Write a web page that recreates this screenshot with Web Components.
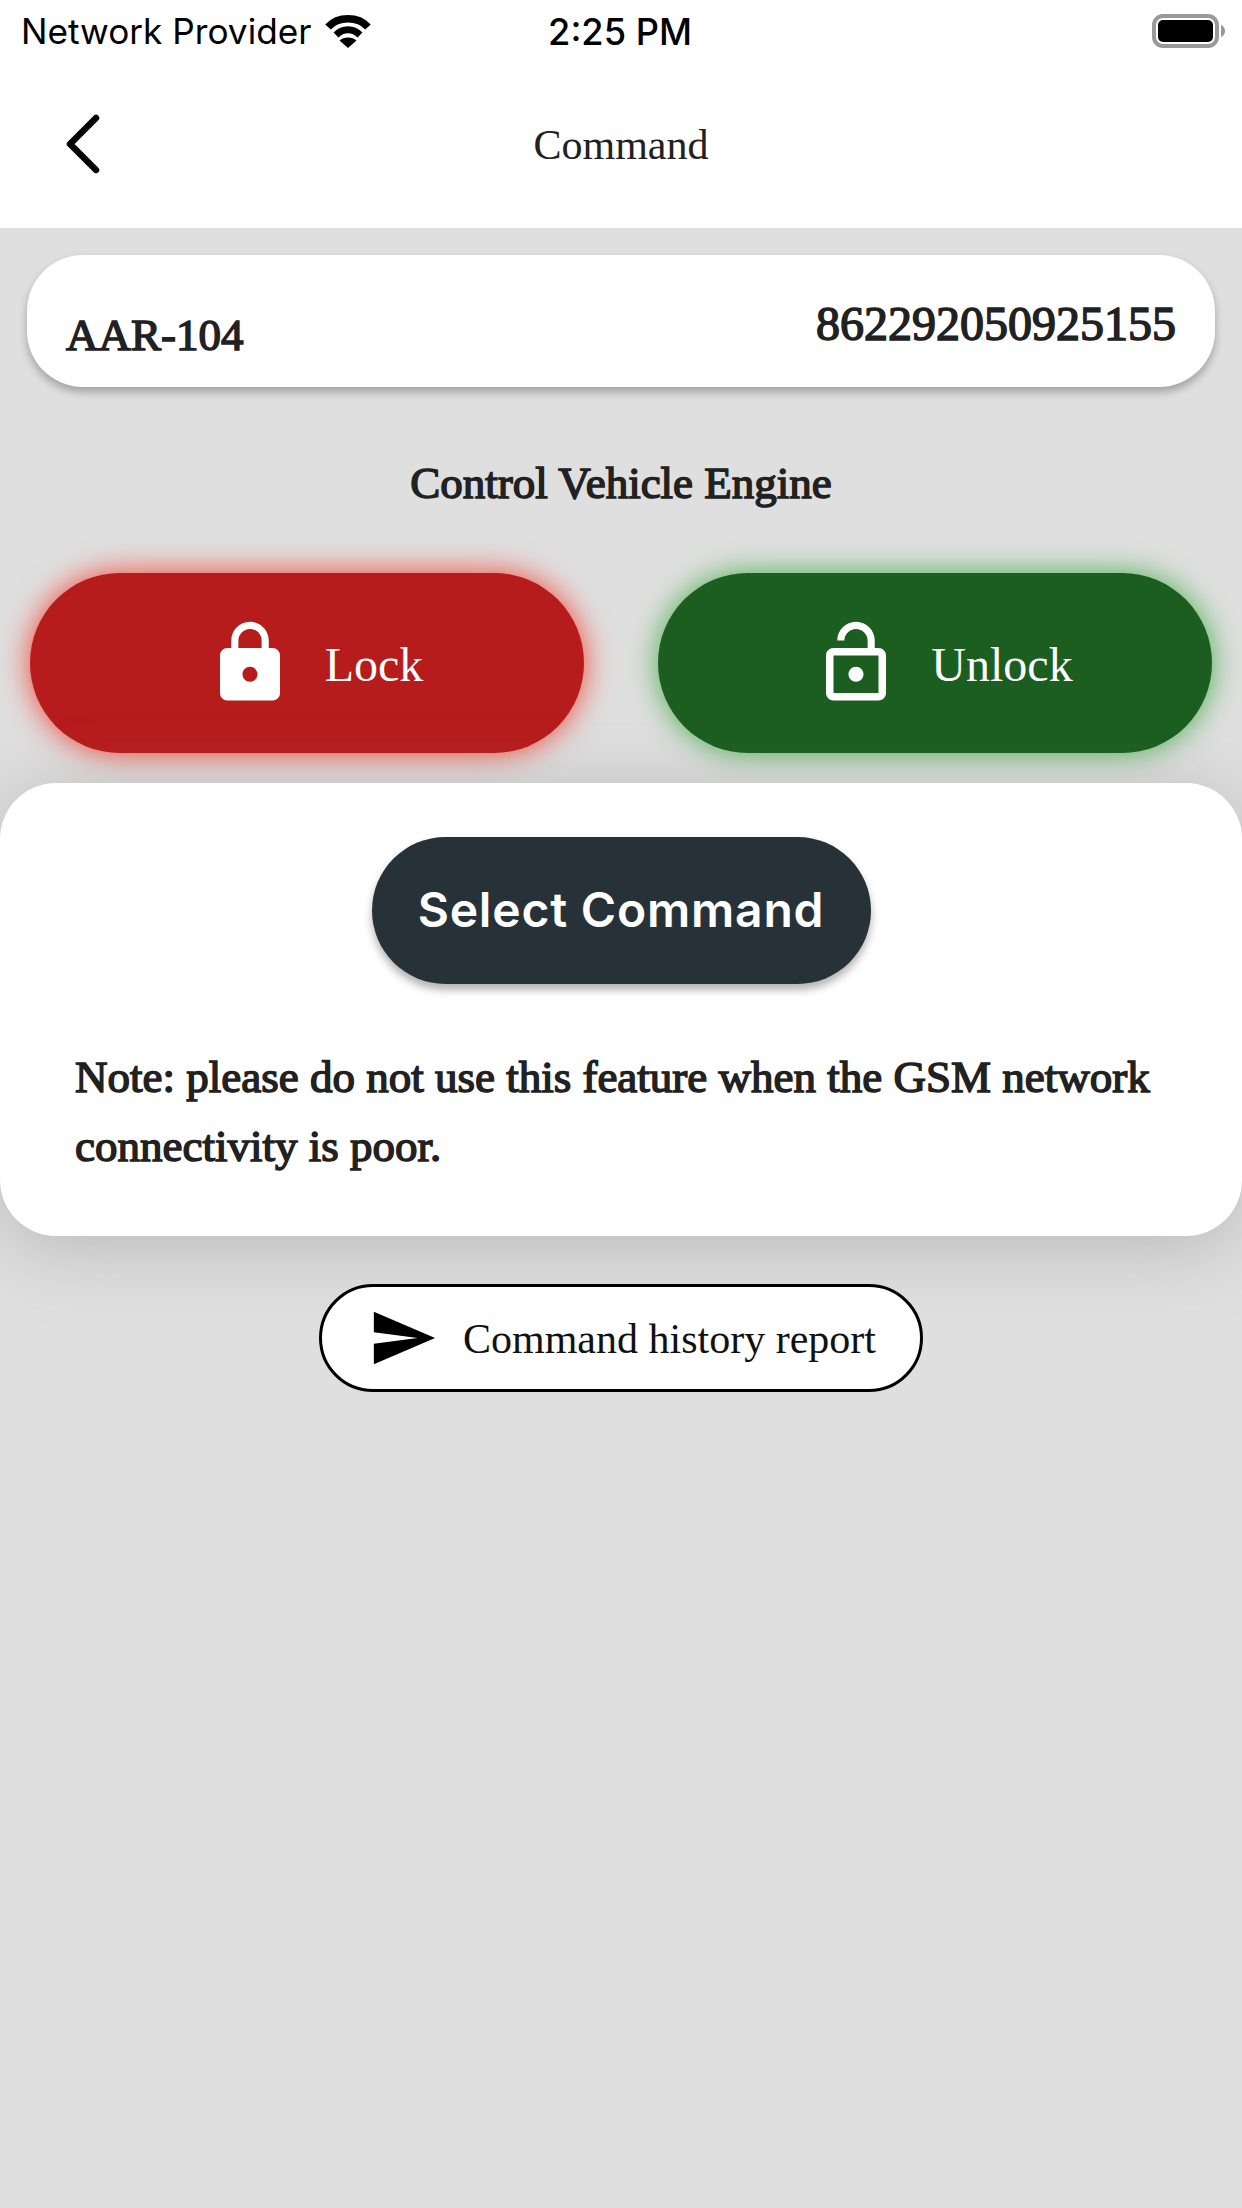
<!DOCTYPE html>
<html lang="en">
<head>
<meta charset="utf-8">
<title>Command</title>
<style>
  html, body { margin: 0; padding: 0; background: #dfdfdf; }
  body { font-family: "Liberation Serif", serif; color: #212121; }
</style>
</head>
<body>
<command-screen>
  <status-bar carrier="Network Provider" time="2:25 PM"></status-bar>
  <nav-header>Command</nav-header>
  <vehicle-card name="AAR-104" imei="862292050925155"></vehicle-card>
  <section-title>Control Vehicle Engine</section-title>
  <engine-row>
    <engine-button tone="lock">Lock</engine-button>
    <engine-button tone="unlock">Unlock</engine-button>
  </engine-row>
  <command-sheet action="Select Command">Note: please do not use this feature when the GSM network connectivity is poor.</command-sheet>
  <report-link>Command history report</report-link>
</command-screen>

<script>
class CommandScreen extends HTMLElement {
  constructor() {
    super();
    this.attachShadow({ mode: "open" }).innerHTML = `
<style>
  :host {
    display: flex;
    flex-direction: column;
    width: 1242px;
    height: 2208px;
    overflow: hidden;
    background: #dfdfdf;
  }
</style>
<slot></slot>`;
  }
}

class StatusBar extends HTMLElement {
  constructor() {
    super();
    this.attachShadow({ mode: "open" }).innerHTML = `
<style>
  :host {
    display: grid;
    grid-template-columns: 1fr auto 1fr;
    align-items: center;
    height: 64px;
    padding: 0 23px 0 21px;
    background: #fff;
    color: #000;
    font: 400 35.2px Inter, "Liberation Sans", sans-serif;
  }
  .left { display: flex; align-items: center; gap: 13px; margin: -2px -5px 0 0; }
  .time { font-weight: 500; font-size: 36.2px; }
  .right { display: flex; justify-content: flex-end; margin-right: -7px; }
  svg { display: block; }
</style>
<div class="left">
  <span>${this.getAttribute("carrier")}</span>
  <svg width="48" height="36" viewBox="0 0 48 36">
    <path d="M4 14C14 3 34 3 44 14" fill="none" stroke="#000" stroke-width="7.5"/>
    <path d="M12 22C19 15 29 15 36 22" fill="none" stroke="#000" stroke-width="7"/>
    <path d="M24 35L15.500 27.500C20 23.500 28 23.500 32.500 27.500Z" fill="#000"/>
  </svg>
</div>
<span class="time">${this.getAttribute("time")}</span>
<div class="right">
  <svg width="74" height="36" viewBox="0 0 74 36">
    <rect x="2" y="2" width="63" height="30" rx="9" fill="none" stroke="#999" stroke-width="4"/>
    <rect x="6" y="6" width="55" height="22" rx="5" fill="#000"/>
    <path d="M69 11C72 12 73 15 73 17C73 19 72 22 69 23Z" fill="#999"/>
  </svg>
</div>`;
  }
}

class NavHeader extends HTMLElement {
  constructor() {
    super();
    this.attachShadow({ mode: "open" }).innerHTML = `
<style>
  :host {
    display: grid;
    grid-template-columns: 1fr auto 1fr;
    align-items: center;
    height: 164px;
    background: #fff;
    color: #212121;
    font-size: 42px;
  }
  .title { margin-top: -2px; }
  svg { display: block; margin: 0 0 4px 64px; }
</style>
<svg width="40" height="62" viewBox="0 0 40 62">
  <path d="M32 5L6 31L32 57" fill="none" stroke="#000" stroke-width="6.500" stroke-linecap="round" stroke-linejoin="round"/>
</svg>
<span class="title"><slot></slot></span>
<span></span>`;
  }
}

class VehicleCard extends HTMLElement {
  constructor() {
    super();
    this.attachShadow({ mode: "open" }).innerHTML = `
<style>
  :host {
    display: flex;
    justify-content: space-between;
    box-sizing: border-box;
    height: 132px;
    margin: 27px 27px 0;
    padding: 0 39px;
    border-radius: 56px;
    background: #fff;
    box-shadow: 0 5px 8px rgba(0, 0, 0, 0.28);
    color: #212121;
    font-size: 45px;
    line-height: 52px;
    -webkit-text-stroke: 1.500px #212121;
  }
  .name { padding-top: 54px; }
  .imei { padding-top: 43px; font-size: 48px; }
</style>
<span class="name">${this.getAttribute("name")}</span>
<span class="imei">${this.getAttribute("imei")}</span>`;
  }
}

class SectionTitle extends HTMLElement {
  constructor() {
    super();
    this.attachShadow({ mode: "open" }).innerHTML = `
<style>
  :host {
    display: block;
    margin-top: 70px;
    text-align: center;
    color: #212121;
    font-size: 45px;
    line-height: 52px;
    -webkit-text-stroke: 1.500px #212121;
  }
</style>
<slot></slot>`;
  }
}

class EngineRow extends HTMLElement {
  constructor() {
    super();
    this.attachShadow({ mode: "open" }).innerHTML = `
<style>
  :host {
    display: flex;
    justify-content: space-between;
    margin-top: 64px;
    padding: 0 30px;
  }
</style>
<slot></slot>`;
  }
}

const LOCK_ICONS = {
  lock: "M18 8h-1V6c0-2.76-2.24-5-5-5S7 3.24 7 6v2H6c-1.100 0-2 .9-2 2v10c0 1.100.9 2 2 2h12c1.100 0 2-.9 2-2V10c0-1.100-.9-2-2-2zm-6 9c-1.100 0-2-.9-2-2s.9-2 2-2 2 .9 2 2-.9 2-2 2zm3.100-9H8.900V6c0-1.710 1.390-3.100 3.100-3.100 1.710 0 3.100 1.390 3.100 3.100v2z",
  unlock: "M12 17c1.100 0 2-.9 2-2s-.9-2-2-2-2 .9-2 2 .9 2 2 2zm6-9h-1V6c0-2.760-2.240-5-5-5S7 3.240 7 6h1.900c0-1.710 1.390-3.100 3.100-3.100 1.710 0 3.100 1.390 3.100 3.100v2H6c-1.100 0-2 .9-2 2v10c0 1.100.9 2 2 2h12c1.100 0 2-.9 2-2V10c0-1.100-.9-2-2-2zm0 12H6V10h12v10z",
};

class EngineButton extends HTMLElement {
  constructor() {
    super();
    const tone = this.getAttribute("tone");
    this.attachShadow({ mode: "open" }).innerHTML = `
<style>
  :host {
    display: flex;
    align-items: center;
    justify-content: center;
    gap: 30px;
    box-sizing: border-box;
    width: 554px;
    height: 180px;
    padding-left: 14px;
    border-radius: 90px;
    color: #fff;
    font-size: 48px;
  }
  :host([tone="lock"]) {
    background: #b71c1c;
    box-shadow: 0 0 30px #f44336;
  }
  :host([tone="unlock"]) {
    background: #1b5e20;
    box-shadow: 0 0 30px #4caf50;
  }
  span { margin-top: 2px; }
  svg { display: block; }
</style>
<svg width="90" height="90" viewBox="0 0 24 24"><path fill="#fff" d="${LOCK_ICONS[tone]}"/></svg>
<span><slot></slot></span>`;
  }
}

class CommandSheet extends HTMLElement {
  constructor() {
    super();
    this.attachShadow({ mode: "open" }).innerHTML = `
<style>
  :host {
    display: flex;
    flex-direction: column;
    align-items: center;
    position: relative;
    box-sizing: border-box;
    height: 453px;
    margin-top: 30px;
    padding-top: 54px;
    border-radius: 56px;
    background: #fff;
    box-shadow: 0 10px 72px rgba(110, 110, 110, 0.34);
  }
  .action {
    display: flex;
    align-items: center;
    justify-content: center;
    width: 499px;
    height: 147px;
    padding-bottom: 2px;
    box-sizing: border-box;
    border-radius: 74px;
    background: #263238;
    box-shadow: 0 6px 9px rgba(0, 0, 0, 0.3);
    color: #fff;
    font: 600 48px Inter, "Liberation Sans", sans-serif;
    letter-spacing: 0.8px;
  }
  .note {
    align-self: stretch;
    margin-top: 59px;
    padding: 0 60px 0 75px;
    color: #212121;
    font-size: 45px;
    line-height: 69px;
    -webkit-text-stroke: 1.500px #212121;
  }
</style>
<div class="action">${this.getAttribute("action")}</div>
<div class="note"><slot></slot></div>`;
  }
}

class ReportLink extends HTMLElement {
  constructor() {
    super();
    this.attachShadow({ mode: "open" }).innerHTML = `
<style>
  :host {
    display: flex;
    align-items: center;
    align-self: center;
    gap: 25px;
    box-sizing: border-box;
    width: 604px;
    height: 108px;
    margin-top: 48px;
    padding-left: 46px;
    border: 3px solid #000;
    border-radius: 54px;
    background: #fff;
    color: #111;
    font-size: 42px;
    position: relative;
  }
  span { margin-top: 1px; }
  svg { display: block; flex: none; }
</style>
<svg width="70" height="70" viewBox="0 0 24 24"><path fill="#000" d="M2.010 21L23 12 2.010 3 2 10l15 2-15 2z"/></svg>
<span><slot></slot></span>`;
  }
}

customElements.define("command-screen", CommandScreen);
customElements.define("status-bar", StatusBar);
customElements.define("nav-header", NavHeader);
customElements.define("vehicle-card", VehicleCard);
customElements.define("section-title", SectionTitle);
customElements.define("engine-row", EngineRow);
customElements.define("engine-button", EngineButton);
customElements.define("command-sheet", CommandSheet);
customElements.define("report-link", ReportLink);
</script>
</body>
</html>
